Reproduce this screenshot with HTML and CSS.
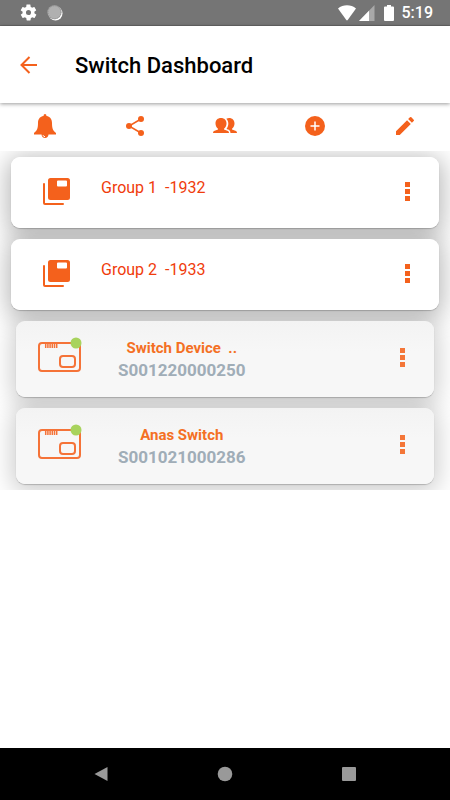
FILE: index.html
```html
<!DOCTYPE html>
<html lang="en">
<head>
    <meta charset="UTF-8">
    <meta name="viewport" content="width=device-width, initial-scale=1.0">
    <title>Switch Dashboard</title>
    <link rel="stylesheet" href="styles.css">
</head>
<body>
    <!-- Shared icons -->
    <svg class="icon-defs" aria-hidden="true">
        <symbol id="icon-group" viewBox="0 0 27 27">
            <path fill="currentColor" fill-rule="evenodd" d="M7.500 0h17q2.500 0 2.500 2.500v17q0 2.500-2.500 2.500h-17q-2.500 0-2.500-2.500v-17q0-2.500 2.500-2.500zM15 2.500q-1 0-1 1v4q0 1 1 1h8q1 0 1-1v-4q0-1-1-1z"/>
            <path fill="none" stroke="currentColor" stroke-width="2" stroke-linecap="round" d="M1 6v19q0 1 1 1h18"/>
        </symbol>
        <symbol id="icon-switch" viewBox="0 0 46 38">
            <g fill="none" stroke="#f57338" stroke-width="2">
                <rect x="2" y="6" width="41" height="28" rx="3"/>
                <rect x="23" y="19" width="15" height="11" rx="3"/>
                <path stroke-width="1.5" d="M8.7 7v4M10.9 7v4M13.1 7v4M15.3 7v4M17.5 7v4M19.7 7v4"/>
            </g>
            <circle cx="39" cy="6" r="5.500" fill="#a8d35d"/>
        </symbol>
        <symbol id="icon-more" viewBox="0 0 5 20">
            <path fill="currentColor" d="M0 0h5v5H0zM0 7h5v5H0zM0 14h5v5H0z"/>
        </symbol>
    </svg>

    <div class="screen">
        <div class="status-bar">
            <div class="status-left">
                <svg width="19" height="19" viewBox="0 0 24 24" fill="#fff"><path d="M19.4 13c0-.3.1-.7.1-1s0-.7-.1-1l2.1-1.6c.2-.2.3-.4.1-.7l-2-3.4c-.1-.2-.4-.3-.6-.2l-2.5 1c-.5-.4-1.1-.7-1.7-1l-.4-2.6c0-.3-.2-.5-.5-.5h-4c-.2 0-.5.2-.5.4L9.100 5.100c-.6.3-1.200.6-1.700 1l-2.500-1c-.2-.1-.5 0-.6.2l-2 3.400c-.1.3-.1.5.1.700L4.600 11c0 .3-.1.700-.1 1s0 .7.1 1l-2.100 1.600c-.2.2-.3.4-.1.700l2 3.400c.1.2.4.3.6.2l2.500-1c.5.4 1.100.7 1.700 1l.4 2.600c0 .3.2.5.5.5h4c.2 0 .5-.2.5-.5l.4-2.600c.6-.3 1.200-.6 1.700-1l2.500 1c.2.1.5 0 .6-.2l2-3.400c.1-.2.1-.5-.1-.7zM12 15.200a3.200 3.200 0 1 1 0-6.400 3.200 3.200 0 0 1 0 6.400z"/></svg>
                <svg width="16" height="16" viewBox="0 0 16 16"><circle cx="8.500" cy="8.500" r="7" fill="#fff"/><circle cx="7.500" cy="7.300" r="7" fill="#b0b0b0"/><circle cx="7.500" cy="7.300" r="6.500" fill="none" stroke="#8c8c8c" stroke-dasharray="1 1"/></svg>
            </div>
            <div class="status-right">
                <svg width="20" height="16" viewBox="0 0 20 16"><path fill="#fff" d="M1 3.500C6-.8 14-.8 19 3.500L10.700 15q-.7.8-1.400 0z"/></svg>
                <svg width="16" height="16" viewBox="0 0 16 16"><path fill="#a9a9a9" d="M15.500 0v16H0z"/><path fill="#fff" d="M10 5.700V16H0z"/></svg>
                <svg class="battery" width="10" height="16" viewBox="0 0 10 16"><path fill="#fff" d="M3 0h4v1.500h2q1 0 1 1V15q0 1-1 1H1q-1 0-1-1V2.500q0-1 1-1h2z"/></svg>
                <span class="clock">5:19</span>
            </div>
        </div>

        <header class="app-bar">
            <button class="icon-button" type="button" aria-label="Back">
                <svg width="18" height="18" viewBox="0 0 18 18" fill="none" stroke="currentColor" stroke-width="2"><path d="M17 9H2M9.500 1L1.500 9l8 8"/></svg>
            </button>
            <h1>Switch Dashboard</h1>
        </header>

        <nav class="toolbar">
            <button class="icon-button" type="button" aria-label="Notifications">
                <svg width="24" height="26" viewBox="0 0 24 26" fill="currentColor"><path d="M10.500 3q0-2 1.500-2t1.500 2c4 .7 5.500 3.500 5.500 7 0 5.500 1 7.500 4 10v1.500H1V20c3-2.500 4-4.500 4-10 0-3.500 1.500-6.300 5.500-7z"/><path d="M8.500 21h7c0 2.500-1.500 4-3.500 4s-3.500-1.500-3.500-4z"/><path d="M10 22.200q.5 1.500 2 1.500" fill="none" stroke="#fff"/></svg>
            </button>
            <button class="icon-button" type="button" aria-label="Share">
                <svg width="24" height="24" viewBox="0 0 24 24" fill="currentColor"><path fill="none" stroke="currentColor" stroke-width="1.500" d="M18 5L6 12l12 7"/><circle cx="18" cy="5" r="3"/><circle cx="6" cy="12" r="3"/><circle cx="18" cy="19" r="3"/></svg>
            </button>
            <button class="icon-button" type="button" aria-label="Users">
                <svg width="24" height="24" viewBox="0 0 24 24" fill="currentColor"><path d="M8 4c3.300 0 5.500 2.200 5.500 5.500 0 2.200-1 4-2.500 5.200v.8l4 1.500q1 .5 1 2H0q0-1.500 1-2l4-1.500v-.8C3.500 13.500 2.500 11.700 2.500 9.500 2.500 6.200 4.700 4 8 4z"/><path d="M13.300 4.700c4.200-1.900 8.200.6 8.200 4.800 0 2.200-1 4-2.500 5.200v.8l4 1.500q1 .5 1 2h-6.500q0-2.300-1.700-3.200L13.500 15c2.500-3.500 2.500-7.500-.2-10.300z"/></svg>
            </button>
            <button class="icon-button" type="button" aria-label="Add">
                <svg width="24" height="24" viewBox="0 0 24 24"><circle cx="12" cy="12" r="10" fill="currentColor"/><path stroke="#fff" stroke-width="1.500" d="M12 7.500v9M7.500 12h9"/></svg>
            </button>
            <button class="icon-button" type="button" aria-label="Edit">
                <svg width="24" height="24" viewBox="0 0 24 24" fill="currentColor"><path d="M3 17.250V21h3.750L17.810 9.940l-3.750-3.750L3 17.250zM20.710 7.040a1 1 0 0 0 0-1.410l-2.340-2.340a1 1 0 0 0-1.410 0l-1.830 1.830 3.750 3.750 1.830-1.830z"/></svg>
            </button>
        </nav>

        <main>
            <ul class="card-list">
                <li class="item group">
                    <div class="card">
                        <svg class="group-icon"><use href="#icon-group"/></svg>
                        <span class="group-name">Group 1&nbsp; -1932</span>
                        <button class="icon-button more" type="button" aria-label="Group 1 options"><svg><use href="#icon-more"/></svg></button>
                    </div>
                </li>
                <li class="item group">
                    <div class="card">
                        <svg class="group-icon"><use href="#icon-group"/></svg>
                        <span class="group-name">Group 2&nbsp; -1933</span>
                        <button class="icon-button more" type="button" aria-label="Group 2 options"><svg><use href="#icon-more"/></svg></button>
                    </div>
                </li>
                <li class="item device">
                    <div class="card">
                        <svg class="device-icon"><use href="#icon-switch"/></svg>
                        <div class="device-info">
                            <span class="device-name">Switch Device&nbsp; ..</span>
                            <span class="device-serial">S001220000250</span>
                        </div>
                        <button class="icon-button more" type="button" aria-label="Switch Device options"><svg><use href="#icon-more"/></svg></button>
                    </div>
                </li>
                <li class="item device">
                    <div class="card">
                        <svg class="device-icon"><use href="#icon-switch"/></svg>
                        <div class="device-info">
                            <span class="device-name">Anas Switch</span>
                            <span class="device-serial">S001021000286</span>
                        </div>
                        <button class="icon-button more" type="button" aria-label="Anas Switch options"><svg><use href="#icon-more"/></svg></button>
                    </div>
                </li>
            </ul>
        </main>

        <div class="system-nav">
            <button class="icon-button" type="button" aria-label="System back">
                <svg width="16" height="16" viewBox="0 0 16 16" fill="currentColor"><path d="M14.500 1v14L1.500 8z"/></svg>
            </button>
            <button class="icon-button" type="button" aria-label="Home">
                <svg width="16" height="16" viewBox="0 0 16 16" fill="currentColor"><circle cx="8" cy="8" r="7.300"/></svg>
            </button>
            <button class="icon-button" type="button" aria-label="Recent apps">
                <svg width="16" height="16" viewBox="0 0 16 16" fill="currentColor"><rect x="1" y="1" width="14" height="14" rx="1"/></svg>
            </button>
        </div>
    </div>
</body>
</html>
```

FILE: styles.css
```css
* {
    margin: 0;
    padding: 0;
    box-sizing: border-box;
}

body {
    font-family: Roboto, Arial, sans-serif;
    background-color: #fff;
    color: #000;
}

svg {
    display: block;
}

.icon-defs {
    display: none;
}

.screen {
    display: flex;
    flex-direction: column;
    min-height: 100vh;
}

.icon-button {
    display: flex;
    align-items: center;
    justify-content: center;
    border: none;
    background: none;
    color: #f4611c;
    cursor: pointer;
}

/* Status bar */
.status-bar {
    display: flex;
    justify-content: space-between;
    align-items: center;
    height: 26px;
    padding: 0 17px 0 19px;
    background-color: #757575;
    border-bottom: 1px solid #666;
}

.status-left {
    display: flex;
    align-items: center;
    gap: 9px;
}

.status-right {
    display: flex;
    align-items: center;
    gap: 2px;
}

.battery {
    margin: 0 6px 0 7px;
}

.clock {
    color: #fff;
    font-size: 16px;
    font-weight: 500;
    line-height: 26px;
}

/* Header */
.app-bar {
    display: flex;
    align-items: center;
    gap: 37px;
    height: 77px;
    padding: 0 20px;
    box-shadow: 0 1px 4px rgba(0, 0, 0, 0.4);
}

h1 {
    font-size: 22px;
    font-weight: 500;
    padding-top: 2px;
}

.toolbar {
    display: grid;
    grid-template-columns: repeat(5, 1fr);
    height: 48px;
    padding-bottom: 2px;
}

main {
    flex: 1;
}

/* Groups and devices */
.card-list {
    display: flex;
    flex-direction: column;
    gap: 11px;
    padding: 6px 11px;
    list-style: none;
    overflow: hidden;
}

.item {
    border-radius: 9px;
    box-shadow: 0 1px 1px rgba(0, 0, 0, 0.2), 0 4px 24px 4px rgba(0, 0, 0, 0.28);
}

.card {
    position: relative; /* keeps the next card's shadow underneath */
    display: flex;
    align-items: center;
    border-radius: 9px;
}

.group .card {
    height: 71px;
    padding: 0 21px 2px 32px;
    background-color: #fff;
}

.group-icon {
    width: 27px;
    height: 27px;
    color: #f4611c;
}

.group-name {
    flex: 1;
    margin-left: 31px;
    padding-bottom: 8px;
    color: #f03c0c;
    font-size: 16px;
}

.device {
    margin: 0 5px;
    box-shadow: 0 1px 1px rgba(0, 0, 0, 0.2), 0 4px 24px 4px rgba(0, 0, 0, 0.2);
}

.device .card {
    height: 76px;
    padding: 0 21px 2px;
    background: linear-gradient(#f3f3f3, #f7f7f7 40%);
}

.device-icon {
    width: 46px;
    height: 38px;
    margin-bottom: 5px;
}

.device-info {
    display: flex;
    flex-direction: column;
    align-items: center;
    margin: 0 auto 0 35px;
    padding-top: 2px;
    font-weight: 700;
    line-height: 22px;
}

.device-name {
    color: #f47024;
    font-size: 15px;
}

.device-serial {
    color: #a0adb7;
    font-size: 17px;
}

.more {
    width: 21px;
    height: 40px;
}

.more svg {
    width: 5px;
    height: 20px;
}

.device .more {
    color: #f47638;
}

/* System navigation */
.system-nav {
    display: flex;
    justify-content: center;
    align-items: center;
    gap: 108px;
    height: 52px;
    background-color: #000;
}

.system-nav .icon-button {
    color: #999;
}
```
